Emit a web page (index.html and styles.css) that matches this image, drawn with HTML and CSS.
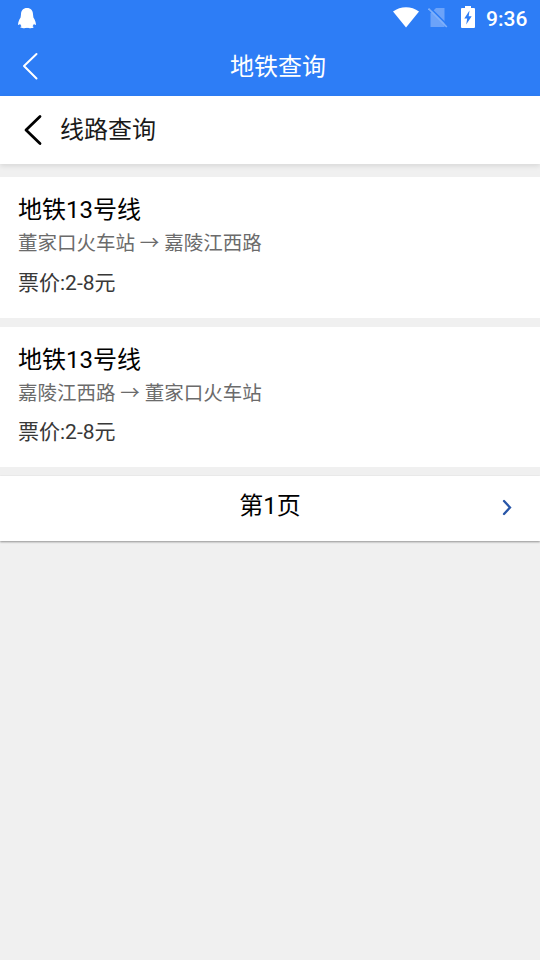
FILE: index.html
```html
<!DOCTYPE html>
<html lang="zh-CN">
<head>
<meta charset="utf-8">
<title>地铁查询</title>
<link rel="stylesheet" href="styles.css">
</head>
<body>
<header class="top">
  <div class="status">
    <svg class="penguin" width="20" height="22" viewBox="0 0 20 22"><path fill="#fff" d="M10 1C6.200 1 4 3.600 4 7.200L3.600 10.500C2 13 1 15.500 1.100 17.500c.3 1 1.200.2 1.900-.8.300 1 .8 1.800 1.500 2.500-.8.300-1.200.8-1 1.300.5.900 4.800.7 6.500.2 1.700.5 6 .7 6.500-.2.200-.5-.2-1-1-1.300.7-.7 1.200-1.500 1.500-2.500.7 1 1.600 1.800 1.900.8.1-2-.9-4.500-2.500-7L16 7.200C16 3.600 13.800 1 10 1z"/></svg>
    <div class="indicators">
      <svg class="wifi" width="26" height="21" viewBox="0 0 26 21"><path fill="#fff" d="M0 4.500C7.500-1.300 18.500-1.300 26 4.500L13 20.500z"/></svg>
      <svg class="sim" width="20" height="21" viewBox="0 0 20 21"><path fill="#6ca3f9" d="M8 1H16.500V20H2.500V6.500z"/><path d="M1.800 .6L20 18.500" stroke="#2d7df6" stroke-width="1.600"/><path d="M.5 1.500L18.800 20" stroke="#7fb0fa" stroke-width="1.700"/></svg>
      <svg class="battery" width="14" height="22" viewBox="0 0 14 22"><path fill="#fff" d="M4 0h6v2h3q1 0 1 1v18q0 1-1 1H1q-1 0-1-1V3q0-1 1-1h3z"/><path fill="#2d7df6" d="M8.500 4.500L3.300 12.500H6.200L5.200 18.500L10.700 10.300H7.700z"/></svg>
      <span class="time">9:36</span>
    </div>
  </div>
  <div class="navbar">
    <svg class="nav-back" width="16" height="28" viewBox="0 0 16 28"><path d="M14.500 2L2 14L14.500 26.500" fill="none" stroke="#fff" stroke-width="2" stroke-linecap="round" stroke-linejoin="round"/></svg>
    <h1>地铁查询</h1>
  </div>
</header>
<div class="subhead">
  <svg width="20" height="32" viewBox="0 0 20 32"><path d="M17 2.500L3 16L17 29.500" fill="none" stroke="#000" stroke-width="2.800" stroke-linecap="round" stroke-linejoin="round"/></svg>
  <h2>线路查询</h2>
</div>
<main>
  <section class="card">
    <h3>地铁13号线</h3>
    <p class="route">董家口火车站 → 嘉陵江西路</p>
    <p class="price">票价:2-8元</p>
  </section>
  <section class="card second">
    <h3>地铁13号线</h3>
    <p class="route">嘉陵江西路 → 董家口火车站</p>
    <p class="price">票价:2-8元</p>
  </section>
  <nav class="pager">
    <span>第1页</span>
    <svg width="12" height="18" viewBox="0 0 12 18"><path d="M3 3L9 9.500L3 16" fill="none" stroke="#2856a8" stroke-width="2.300" stroke-linecap="round"/></svg>
  </nav>
</main>
</body>
</html>
```
FILE: styles.css
```css
* { box-sizing: border-box; }
body {
  margin: 0;
  min-height: 960px;
  background: #f0f0f0;
  color: #000;
  font-family: Roboto, "Noto Sans CJK SC", sans-serif;
  font-weight: 400;
}
h1, h2, h3, p { margin: 0; font-weight: 400; }
svg { display: block; }
.top { height: 96px; background: #2d7df6; color: #fff; }
.status {
  display: flex;
  justify-content: space-between;
  height: 36px;
  padding: 7px 12px 0 17px;
}
.indicators { display: flex; }
.sim { margin-left: 9px; }
.battery { margin: -1px 11px 0 13px; }
.time { width: 42px; font-size: 21px; font-weight: 500; line-height: 24px; white-space: nowrap; }
.navbar {
  display: grid;
  grid-template-columns: 44px 1fr 28px;
  align-items: center;
  height: 60px;
}
.nav-back { margin-left: 22px; }
.navbar h1 { text-align: center; font-size: 24px; line-height: 36px; padding-top: 2px; }
.subhead {
  display: flex;
  align-items: center;
  gap: 17px;
  height: 68px;
  padding-left: 23px;
  background: #fff;
  box-shadow: 0 2px 5px rgba(0, 0, 0, .1);
}
.subhead h2 { font-size: 24px; line-height: 36px; color: #1a1a1a; }
main { padding-top: 13px; }
.card {
  height: 141px;
  margin-bottom: 9px;
  padding: 15px 18px 0;
  background: #fff;
}
.card.second { height: 140px; }
h3 { font-size: 24px; line-height: 36px; }
.route { margin-top: 1px; font-size: 19.5px; line-height: 30px; color: #6b6b6b; }
.price { margin-top: 9px; font-size: 21px; line-height: 30px; color: #383838; }
.second .price { margin-top: 8px; }
.pager {
  display: grid;
  grid-template-columns: 1fr auto 1fr;
  height: 65px;
  padding: 12px 27px 0;
  background: #fff;
  box-shadow: 0 1px 2px rgba(0, 0, 0, .4);
}
.pager span { grid-column: 2; font-size: 24px; line-height: 36px; }
.pager svg { justify-self: end; margin-top: 10px; }
```
